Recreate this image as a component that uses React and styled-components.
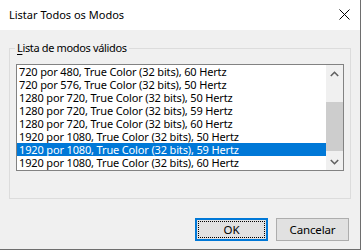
import React from 'react'
import styled, { createGlobalStyle } from 'styled-components';

const Global = createGlobalStyle`
    html, body { margin:0; padding:0; background:#fff; }
    * { box-sizing:border-box; }
`

const modes = [
    '720 por 480, True Color (32 bits), 60 Hertz',
    '720 por 576, True Color (32 bits), 50 Hertz',
    '1280 por 720, True Color (32 bits), 50 Hertz',
    '1280 por 720, True Color (32 bits), 59 Hertz',
    '1280 por 720, True Color (32 bits), 60 Hertz',
    '1920 por 1080, True Color (32 bits), 50 Hertz',
    '1920 por 1080, True Color (32 bits), 59 Hertz',
    '1920 por 1080, True Color (32 bits), 60 Hertz',
]

const App = () => {
    return (
        <Window>
            <Global />
            <TitleBar>
                <Title>Listar Todos os Modos</Title>
                <Close>
                    <svg width="11" height="11" viewBox="0 0 11 11">
                        <path d="M0.5 0.5 L10.5 10.5 M10.5 0.5 L0.5 10.5" stroke="#000" strokeWidth="1" fill="none"/>
                    </svg>
                </Close>
            </TitleBar>
            <Body>
                <GroupBox>
                    <Legend><u>L</u>ista de modos válidos</Legend>
                    <ListBox>
                        <Rows>
                            {modes.map((m, i) => (
                                <Row key={i} selected={i === 6}>{m}</Row>
                            ))}
                        </Rows>
                        <ScrollBar>
                            <Arrow>
                                <svg width="9" height="6" viewBox="0 0 9 6">
                                    <path d="M0.8 5 L4.5 1.3 L8.2 5" stroke="#606060" strokeWidth="1.6" fill="none"/>
                                </svg>
                            </Arrow>
                            <Track>
                                <Thumb />
                            </Track>
                            <Arrow>
                                <svg width="9" height="6" viewBox="0 0 9 6">
                                    <path d="M0.8 1 L4.5 4.7 L8.2 1" stroke="#606060" strokeWidth="1.6" fill="none"/>
                                </svg>
                            </Arrow>
                        </ScrollBar>
                    </ListBox>
                </GroupBox>
                <Buttons>
                    <Button primary><Focus>OK</Focus></Button>
                    <Button>Cancelar</Button>
                </Buttons>
            </Body>
        </Window>
    )
}

const Window = styled.div`
    width:361px; height:250px;
    display:flex; flex-direction:column;
    border-right:1px solid #6e6e6e;
    border-bottom:1px solid #6e6e6e;
    font-family:"Noto Sans", "Open Sans", sans-serif;
    font-size:11px;
    letter-spacing:-0.15px;
    color:#000;
`
const TitleBar = styled.div`
    height:30px;
    background:#fff;
    display:flex; align-items:center; justify-content:space-between;
    padding:0 10px 0 9px;
`
const Title = styled.div`
    font-size:11px;
    line-height:16px;
    letter-spacing:0;
`
const Close = styled.div`
    display:flex; align-items:center;
    margin-top:-1px;
`
const Body = styled.div`
    flex:1;
    background:#f0f0f0;
    display:flex; flex-direction:column;
    padding:18px 9px 0 9px;
`
const GroupBox = styled.div`
    position:relative;
    border:1px solid #dcdcdc;
    height:151px;
    padding:15px 0 0 6px;
`
const Legend = styled.span`
    position:absolute;
    top:-9px; left:5px;
    padding:0 2px;
    background:#f0f0f0;
    line-height:16px;
    letter-spacing:-0.35px;
    u { text-decoration-thickness:1px; text-underline-offset:2px; }
`
const ListBox = styled.div`
    width:328px;
    height:107px;
    border:1px solid #828282;
    background:#fff;
    display:flex;
`
const Rows = styled.div`
    flex:1;
    display:flex; flex-direction:column;
`
const Row = styled.div`
    height:13px;
    line-height:13px;
    padding-left:2px;
    white-space:nowrap;
    background:${p => p.selected ? '#0078d7' : 'transparent'};
    color:${p => p.selected ? '#fff' : '#000'};
`
const ScrollBar = styled.div`
    width:17px;
    background:#f0f0f0;
    display:flex; flex-direction:column;
`
const Arrow = styled.div`
    height:17px;
    display:flex; align-items:center; justify-content:center;
`
const Track = styled.div`
    flex:1;
    padding-top:20px;
`
const Thumb = styled.div`
    height:49px;
    background:#cdcdcd;
`
const Buttons = styled.div`
    display:flex; justify-content:flex-end; gap:8px;
    margin-top:19px;
    padding-right:2px;
`
const Button = styled.div`
    width:73px; height:23px;
    background:#e1e1e1;
    border:${p => p.primary ? '2px solid #0078d7' : '1px solid #adadad'};
    display:flex; align-items:center; justify-content:center;
    padding:${p => p.primary ? '1px' : '0'};
    font-size:11.5px;
`
const Focus = styled.div`
    width:100%; height:100%;
    border:1px dotted #000;
    display:flex; align-items:center; justify-content:center;
`

export default App;
